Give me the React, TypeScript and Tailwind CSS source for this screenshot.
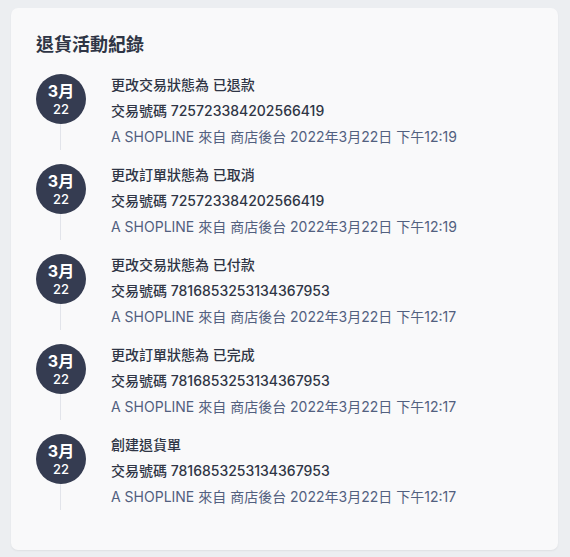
import React from "react";

const items = [
  { title: "更改交易狀態為 已退款", no: "725723384202566419", time: "下午12:19" },
  { title: "更改訂單狀態為 已取消", no: "725723384202566419", time: "下午12:19" },
  { title: "更改交易狀態為 已付款", no: "7816853253134367953", time: "下午12:17" },
  { title: "更改訂單狀態為 已完成", no: "7816853253134367953", time: "下午12:17" },
  { title: "創建退貨單", no: "7816853253134367953", time: "下午12:17" },
];

export default function App() {
  return (
    <div
      className="min-h-[557px] w-[570px] bg-[#eceef1] pt-[8px] pl-[11px]"
      style={{ fontFamily: 'Inter, "Noto Sans CJK TC", sans-serif' }}
    >
      <div className="w-[547px] rounded-[7px] bg-[#f9f9fa] px-[25px] pt-[24px] pb-[40px] shadow-[0_1px_2px_rgba(0,0,0,0.06)]">
        <h2 className="text-[18px] leading-[26px] font-bold text-[#2f3545]">退貨活動紀錄</h2>
        <div className="mt-[16px] flex flex-col">
          {items.map((it, i) => (
            <div key={i} className={`flex ${i < items.length - 1 ? "pb-[14px]" : ""}`}>
              <div className="relative w-[50px] shrink-0">
                <div className="absolute top-0 bottom-0 left-[24px] w-px bg-[#e2e4ea]" />
                <div className="relative flex h-[50px] w-[50px] flex-col items-center justify-center rounded-full bg-[#353c51] text-white">
                  <span className="text-[16px] leading-[19px] font-bold">3月</span>
                  <span className="text-[13px] leading-[16px] font-medium">22</span>
                </div>
              </div>
              <div className="ml-[25px] -mt-[2px] flex flex-col text-[14px] leading-[26px]">
                <div className="font-medium text-[#2f3545]">{it.title}</div>
                <div className="font-medium text-[#2f3545]">交易號碼 {it.no}</div>
                <div className="text-[#52607f]">A SHOPLINE 來自 商店後台 2022年3月22日 {it.time}</div>
              </div>
            </div>
          ))}
        </div>
      </div>
    </div>
  );
}
